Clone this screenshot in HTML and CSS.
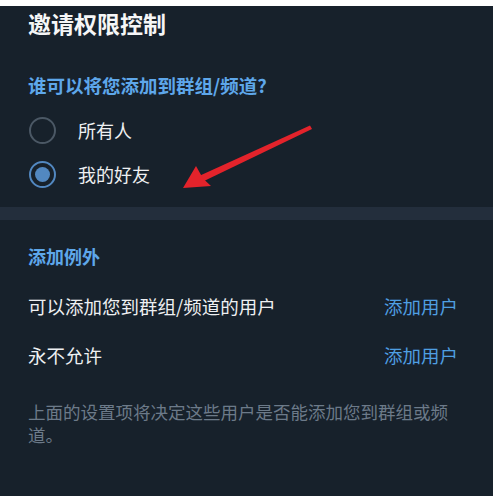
FILE: index.html
```html
<!DOCTYPE html>
<html lang="zh-CN">
<head>
    <meta charset="UTF-8">
    <meta name="viewport" content="width=device-width, initial-scale=1.0">
    <title>邀请权限控制</title>
    <link rel="stylesheet" href="styles.css">
</head>
<body>
    <div class="panel">
        <div class="section top-section">
            <h2 class="title">邀请权限控制</h2>
            <div class="section-label question">谁可以将您添加到群组/频道?</div>

            <div class="radio-row">
                <span class="radio"></span>
                <span class="radio-text">所有人</span>
            </div>
            <div class="radio-row">
                <span class="radio checked"></span>
                <span class="radio-text">我的好友</span>
            </div>
        </div>

        <div class="divider"></div>

        <div class="section">
            <div class="section-label">添加例外</div>

            <div class="exception-row first-row">
                <span>可以添加您到群组/频道的用户</span>
                <a class="add-link">添加用户</a>
            </div>
            <div class="exception-row">
                <span>永不允许</span>
                <a class="add-link">添加用户</a>
            </div>

            <p class="note">上面的设置项将决定这些用户是否能添加您到群组或频道。</p>
        </div>
    </div>

    <!-- red annotation arrow drawn on top of the screenshot -->
    <svg class="arrow" width="495" height="496" viewBox="0 0 495 496">
        <polygon points="310,125.5 312,129 203,181.5 199,176" fill="#e3232b"/>
        <polygon points="183,188 196,166 203,178.5 211,186" fill="#e3232b"/>
    </svg>
</body>
</html>
```

FILE: styles.css
```css
body {
    margin: 0;
    padding: 6px 0 0 0;
    background-color: #fff;
    font-family: "Noto Sans CJK SC", "Noto Sans", sans-serif;
    position: relative;
    height: 490px;
    overflow: hidden;
}
.panel {
    width: 493px;
    height: 490px;
    background-color: #17212b;
    color: #f0f2f4;
}
.section {
    padding: 24px 35px 0 28px;
}
.top-section {
    padding-top: 0;
    padding-bottom: 11px;
}
.title {
    margin: 0;
    font-size: 23px;
    font-weight: bold;
    line-height: 35px;
    color: #f5f6f7;
}
.section-label {
    font-size: 18px;
    font-weight: bold;
    line-height: 24px;
    color: #5ea7ea;
}
.question {
    margin-top: 32px;
    margin-bottom: 11px;
    font-size: 18.5px;
}
.radio-row {
    display: flex;
    align-items: center;
    height: 44px;
    padding-left: 1px;
}
.radio {
    box-sizing: border-box;
    width: 27px;
    height: 27px;
    border: 2px solid #4b5865;
    border-radius: 50%;
    margin-right: 22px;
    display: flex;
    align-items: center;
    justify-content: center;
}
.radio.checked {
    border-color: #5288c1;
}
.radio.checked::after {
    content: "";
    width: 15px;
    height: 15px;
    border-radius: 50%;
    background-color: #5288c1;
}
.radio-text {
    font-size: 18px;
    color: #eef0f2;
}
.divider {
    height: 13px;
    background-color: #232e3c;
}
.exception-row {
    display: flex;
    justify-content: space-between;
    align-items: center;
    height: 49px;
    font-size: 18.5px;
    color: #eef0f2;
}
.first-row {
    margin-top: 13px;
}
.add-link {
    color: #4f9fe2;
    cursor: pointer;
}
.note {
    margin: 21px 0 0 0;
    font-size: 17.5px;
    line-height: 23px;
    color: #6c7a89;
}
.arrow {
    position: absolute;
    top: 0;
    left: 0;
    pointer-events: none;
}
```
